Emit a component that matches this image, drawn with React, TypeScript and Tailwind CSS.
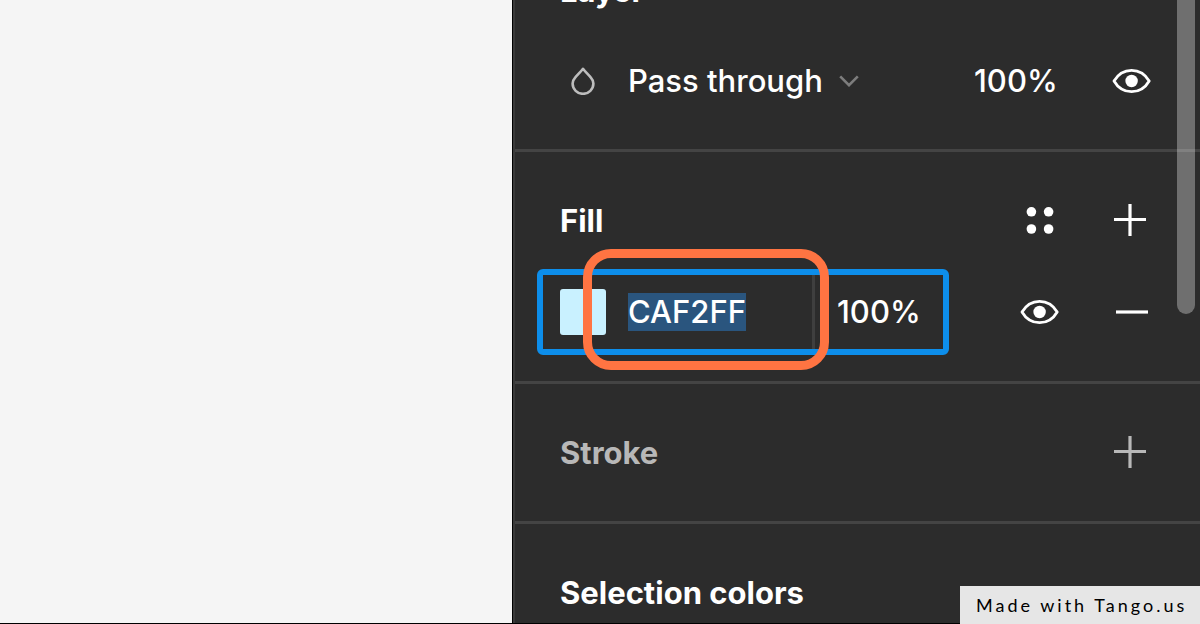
import { useEffect, useRef, useState, type ReactNode } from 'react'
import clsx from 'clsx'

function DropIcon() {
  return (
    <svg className="h-7 w-6" viewBox="0 0 24 28" fill="none" stroke="#bdbdbd" strokeWidth="2.6" strokeLinejoin="round" aria-hidden="true">
      <path d="M12 1.8C9.6 4.9 6.6 7.5 4.3 10.4A10.6 10.4 0 0 0 1.6 16.6A10.4 10.2 0 0 0 22.4 16.6A10.6 10.4 0 0 0 19.7 10.4C17.4 7.5 14.4 4.9 12 1.8Z" />
    </svg>
  )
}

function ChevronIcon() {
  return (
    <svg className="h-3 w-5" viewBox="0 0 20 12" fill="none" stroke="#7d7d7d" strokeWidth="2.6" aria-hidden="true">
      <path d="M1.2 1.4L10 10.2L18.8 1.4" />
    </svg>
  )
}

function EyeIcon() {
  return (
    <svg className="h-[26px] w-10" viewBox="0 0 40 26" aria-hidden="true">
      <path
        d="M2 13C6.2 5.8 12.4 2.3 19.6 2.3S33 5.8 37.2 13C33 20.2 26.8 23.7 19.6 23.7S6.2 20.2 2 13Z"
        fill="none"
        stroke="currentColor"
        strokeWidth="2.8"
        strokeLinejoin="round"
      />
      <circle cx="19.6" cy="13" r="6.2" fill="currentColor" />
    </svg>
  )
}

function StylesIcon() {
  return (
    <svg className="h-7 w-7" viewBox="0 0 28 28" fill="currentColor" aria-hidden="true">
      <circle cx="5.4" cy="5.8" r="4.8" />
      <circle cx="22.6" cy="5.8" r="4.8" />
      <circle cx="5.4" cy="23" r="4.8" />
      <circle cx="22.6" cy="23" r="4.8" />
    </svg>
  )
}

function PlusIcon() {
  return (
    <svg className="h-8 w-9" viewBox="0 0 36 32" stroke="currentColor" strokeWidth="3.2" aria-hidden="true">
      <path d="M16 0V32M0 15.5H32" />
    </svg>
  )
}

function MinusIcon() {
  return (
    <svg className="h-8 w-8" viewBox="0 0 32 32" stroke="currentColor" strokeWidth="3.2" aria-hidden="true">
      <path d="M0 16H32" />
    </svg>
  )
}

function IconButton({ label, children }: { label: string; children: ReactNode }) {
  return (
    <button type="button" aria-label={label} className="flex h-[92px] w-[92px] shrink-0 items-center justify-center">
      {children}
    </button>
  )
}

function Section({ title, muted, actions, children }: {
  title: string
  muted?: boolean
  actions?: ReactNode
  children?: ReactNode
}) {
  return (
    <section
      className={clsx(
        'border-b-3 border-[#444444] px-[22px] pt-[22px] pb-[23px]',
        muted ? 'text-[#b8b8b8]' : 'text-white'
      )}
    >
      <div className="flex h-[92px] items-center">
        <h2 className="flex-1 pt-0.5 pl-[23px] leading-[38px] font-bold">{title}</h2>
        {actions}
      </div>
      {children}
    </section>
  )
}

export default function App() {
  const [hex, setHex] = useState('CAF2FF')
  const [fillOpacity, setFillOpacity] = useState('100%')
  const [layerOpacity, setLayerOpacity] = useState('100%')
  const hexInput = useRef<HTMLInputElement>(null)

  // Start with the hex value focused and selected, ready to be replaced
  useEffect(() => {
    hexInput.current?.focus()
    hexInput.current?.select()
  }, [])

  return (
    <div className="relative flex h-screen overflow-hidden bg-black pb-px font-['Inter',sans-serif] text-[31px] leading-[38px] font-medium">
      <main className="min-w-0 flex-1 bg-[#f5f5f5]" />

      <aside className="relative w-[688px] shrink-0 overflow-hidden border-l border-black bg-[#2c2c2c]">
        <div className="flow-root h-full border-l-2 border-[#3a3a3a]">
          {/* Panel is scrolled part of the way down */}
          <div className="-mt-[78px]">
            <Section title="Layer">
              <div className="flex h-[90px] items-center pl-[23px]">
                <span className="flex w-[46px] justify-center">
                  <DropIcon />
                </span>
                <label className="ml-[22px] flex items-center gap-4">
                  <select aria-label="Blend mode" className="appearance-none bg-transparent outline-none">
                    <option>Pass through</option>
                  </select>
                  <ChevronIcon />
                </label>
                <input
                  aria-label="Layer opacity"
                  value={layerOpacity}
                  onChange={(e) => setLayerOpacity(e.target.value)}
                  className="ml-auto w-28 bg-transparent outline-none"
                />
                <IconButton label="Toggle layer visibility">
                  <EyeIcon />
                </IconButton>
              </div>
            </Section>

            <Section
              title="Fill"
              actions={
                <>
                  <IconButton label="Styles">
                    <StylesIcon />
                  </IconButton>
                  <IconButton label="Add fill">
                    <PlusIcon />
                  </IconButton>
                </>
              }
            >
              <div className="flex h-[92px] items-center">
                <div className="relative">
                  <div className="flex h-[86px] w-[412px] items-center rounded-md border-6 border-[#0d8eeb] pl-[17px]">
                    <button type="button" aria-label="Fill color" className="h-[46px] w-[46px] shrink-0 rounded-[3px] bg-[#c9f1ff]" />
                    <input
                      ref={hexInput}
                      aria-label="Fill hex"
                      value={hex}
                      onChange={(e) => setHex(e.target.value)}
                      className="ml-[22px] w-[184px] bg-transparent outline-none selection:bg-[#2b5680]/99 selection:text-white"
                    />
                    <div className="w-[3px] self-stretch bg-[#3f3f3f]" />
                    <input
                      aria-label="Fill opacity"
                      value={fillOpacity}
                      onChange={(e) => setFillOpacity(e.target.value)}
                      className="ml-[22px] w-24 bg-transparent outline-none"
                    />
                  </div>
                  {/* Step highlight */}
                  <div className="pointer-events-none absolute -top-5 left-[46px] h-[121px] w-[246px] rounded-[28px] border-9 border-[#ff7442]" />
                </div>
                <div className="ml-auto flex">
                  <IconButton label="Toggle fill visibility">
                    <EyeIcon />
                  </IconButton>
                  <IconButton label="Remove fill">
                    <MinusIcon />
                  </IconButton>
                </div>
              </div>
            </Section>

            <Section
              title="Stroke"
              muted
              actions={
                <IconButton label="Add stroke">
                  <PlusIcon />
                </IconButton>
              }
            />

            <Section title="Selection colors" />
          </div>
        </div>

        <div className="absolute top-0 right-[5px] h-[314px] w-[18px] rounded-b-full bg-white/32" />
      </aside>

      <a
        href="https://tango.us"
        className="absolute right-0 bottom-0 flex h-[38px] w-60 items-center bg-[#e6e6e6] pl-4 font-['Lato',sans-serif] text-lg font-normal tracking-[3px] whitespace-nowrap text-black"
      >
        Made with Tango.us
      </a>
    </div>
  )
}
